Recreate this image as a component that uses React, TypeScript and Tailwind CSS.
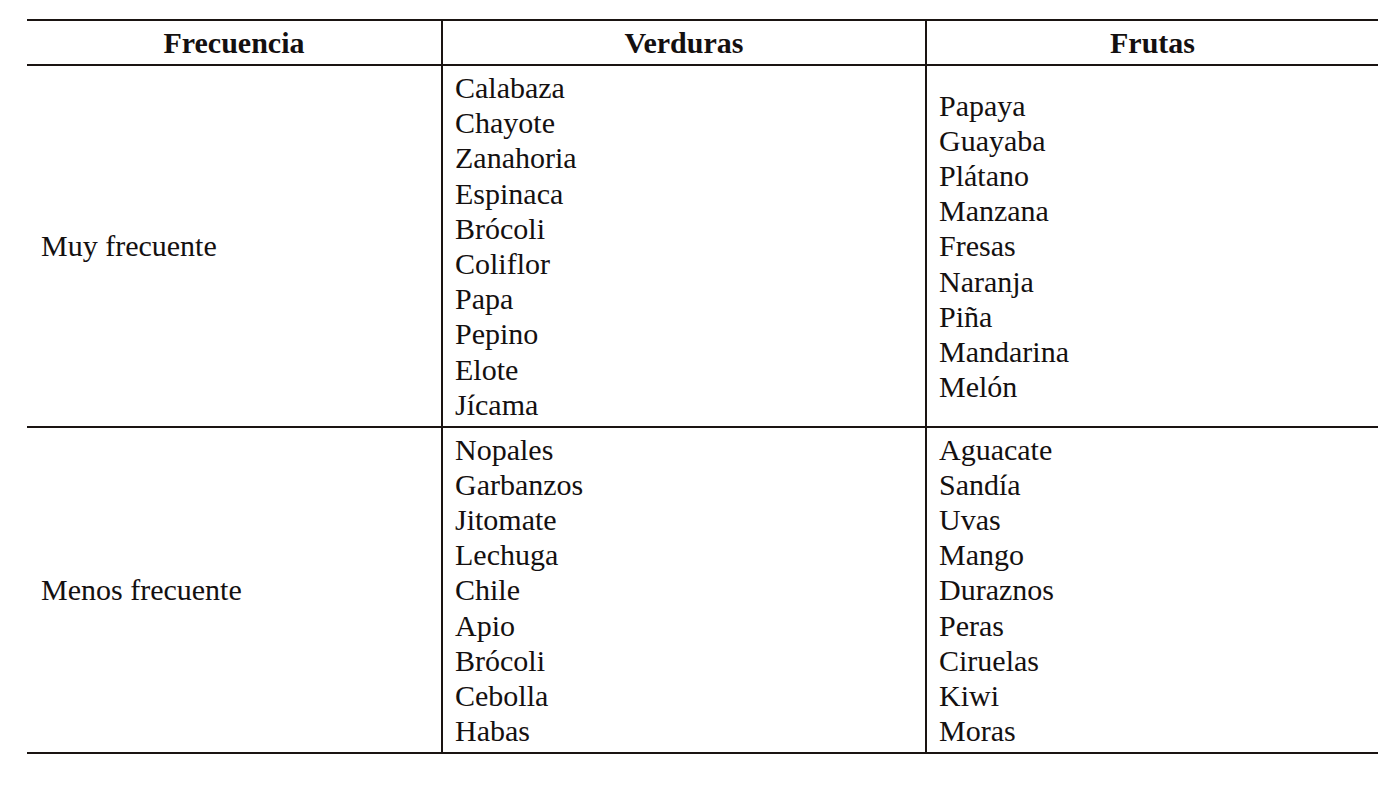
import React from "react";

const verdurasMuy = ["Calabaza", "Chayote", "Zanahoria", "Espinaca", "Brócoli", "Coliflor", "Papa", "Pepino", "Elote", "Jícama"];
const frutasMuy = ["Papaya", "Guayaba", "Plátano", "Manzana", "Fresas", "Naranja", "Piña", "Mandarina", "Melón"];
const verdurasMenos = ["Nopales", "Garbanzos", "Jitomate", "Lechuga", "Chile", "Apio", "Brócoli", "Cebolla", "Habas"];
const frutasMenos = ["Aguacate", "Sandía", "Uvas", "Mango", "Duraznos", "Peras", "Ciruelas", "Kiwi", "Moras"];

const List = ({ items }: { items: string[] }) => (
    <div className="flex flex-col">
        {items.map((item, i) => (
            <span key={i}>{item}</span>
        ))}
    </div>
);

const App = () => {
    return (
        <div
            className="w-[1400px] h-[788px] bg-white pt-[19px] pl-[27px] text-[30px] leading-[35.2px] text-[#141010]"
            style={{ fontFamily: '"Liberation Serif", "Times New Roman", serif' }}
        >
            <div className="w-[1351px] grid grid-cols-[414px_484px_453px] border-t-2 border-b-2 border-[#1a1412]">
                {/* header */}
                <div className="h-[45px] border-b-2 border-[#1a1412] flex items-center justify-center font-bold">
                    Frecuencia
                </div>
                <div className="h-[45px] border-b-2 border-l-2 border-[#1a1412] flex items-center justify-center font-bold">
                    Verduras
                </div>
                <div className="h-[45px] border-b-2 border-l-2 border-[#1a1412] flex items-center justify-center font-bold">
                    Frutas
                </div>

                {/* muy frecuente */}
                <div className="h-[362px] border-b-2 border-[#1a1412] flex items-center pl-[14px]">
                    Muy frecuente
                </div>
                <div className="h-[362px] border-b-2 border-l-2 border-[#1a1412] flex items-center pl-3">
                    <List items={verdurasMuy} />
                </div>
                <div className="h-[362px] border-b-2 border-l-2 border-[#1a1412] flex items-center pl-3">
                    <List items={frutasMuy} />
                </div>

                {/* menos frecuente */}
                <div className="h-[324px] flex items-center pl-[14px]">Menos frecuente</div>
                <div className="h-[324px] border-l-2 border-[#1a1412] flex items-center pl-3">
                    <List items={verdurasMenos} />
                </div>
                <div className="h-[324px] border-l-2 border-[#1a1412] flex items-center pl-3">
                    <List items={frutasMenos} />
                </div>
            </div>
        </div>
    );
};

export default App;
